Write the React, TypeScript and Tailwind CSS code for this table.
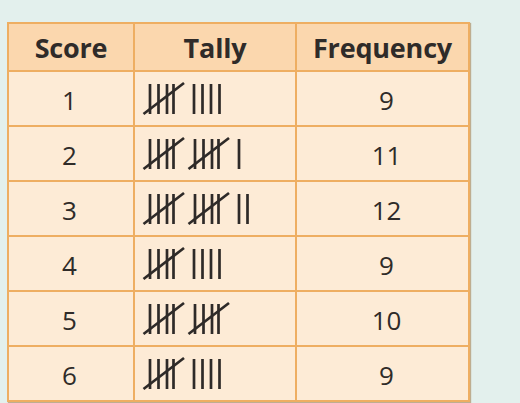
import React from 'react';

type Row = { score: number; tally: number; freq: number };

const rows: Row[] = [
  { score: 1, tally: 9, freq: 9 },
  { score: 2, tally: 11, freq: 11 },
  { score: 3, tally: 12, freq: 12 },
  { score: 4, tally: 9, freq: 9 },
  { score: 5, tally: 10, freq: 10 },
  { score: 6, tally: 9, freq: 9 },
];

// draws tally marks: bundles of five with a slash, then loose strokes
const Tally: React.FC<{ count: number }> = ({ count }) => {
  const groups = Math.floor(count / 5);
  const singles = count % 5;
  const marks: React.ReactNode[] = [];
  for (let g = 0; g < groups; g++) {
    const ox = g * 45;
    [8, 16.5, 25, 31.5].forEach((x, i) => {
      marks.push(<line key={`g${g}v${i}`} x1={ox + x} y1={3} x2={ox + x} y2={33} />);
    });
    marks.push(<line key={`g${g}d`} x1={ox + 1.5} y1={33} x2={ox + 42} y2={2} />);
  }
  const start = groups > 0 ? (groups - 1) * 45 + 52 : 4;
  for (let s = 0; s < singles; s++) {
    const x = start + s * 8.5;
    marks.push(<line key={`s${s}`} x1={x} y1={3} x2={x} y2={33} />);
  }
  return (
    <svg width="130" height="35" viewBox="0 0 130 35" stroke="#2e2a28" strokeWidth="2.7" strokeLinecap="butt">
      {marks}
    </svg>
  );
};

const App: React.FC = () => {
  return (
    <div className="w-[520px] h-[403px] bg-[#e3f0ed] pl-[7px] pt-[22px]" style={{ fontFamily: '"Open Sans", "Liberation Sans", sans-serif' }}>
      <div className="w-[463px] border-2 border-[#eeae62] shadow-[1px_1px_1px_rgba(160,120,70,0.55)] text-[#2f2b29]">
        <div className="grid grid-cols-[124px_162px_173px] h-[46px] bg-[#fbd7ae] text-[27px] font-bold tracking-[-0.2px]">
          <div className="flex items-center justify-center pt-[3px]">Score</div>
          <div className="flex items-center justify-center pt-[3px] border-l-2 border-[#eeae62]">Tally</div>
          <div className="flex items-center justify-center pt-[3px] border-l-2 border-[#eeae62]">Frequency</div>
        </div>
        {rows.map((r) => (
          <div key={r.score} className="grid grid-cols-[124px_162px_173px] h-[55px] bg-[#fdebd6] border-t-2 border-[#eeae62] text-[26px]">
            <div className="flex items-center justify-center pt-[3px] pr-[3px]">{r.score}</div>
            <div className="flex items-center pl-[7px] border-l-2 border-[#eeae62]">
              <Tally count={r.tally} />
            </div>
            <div className="flex items-center justify-center pt-[3px] pl-[8px] border-l-2 border-[#eeae62]">{r.freq}</div>
          </div>
        ))}
      </div>
    </div>
  );
};

export default App;
